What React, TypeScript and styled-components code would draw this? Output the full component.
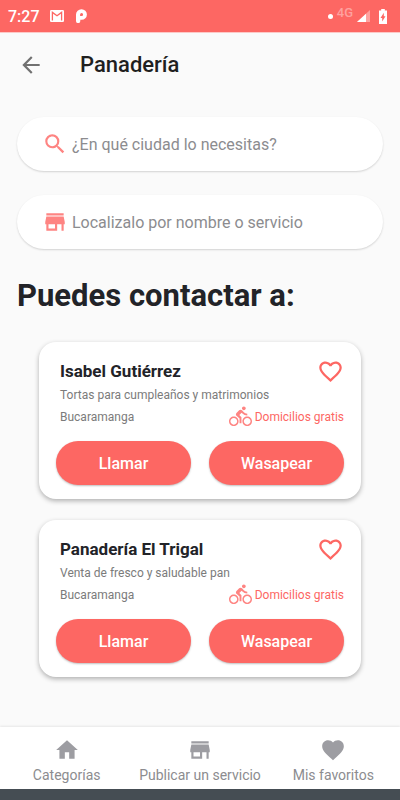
import React from "react";
import styled, { createGlobalStyle } from "styled-components";
import {
  MdArrowBack,
  MdDirectionsBike,
  MdFavorite,
  MdFavoriteBorder,
  MdHome,
  MdSearch,
  MdStore,
} from "react-icons/md";

const GlobalStyle = createGlobalStyle`
  *, *::before, *::after { box-sizing: border-box; }
  body {
    margin: 0;
    background: #fafafa;
    color: #222328;
    font-family: Roboto, "Liberation Sans", sans-serif;
  }
  button, input { font: inherit; }
`;

const coral = "#fd6763";
const softCoral = "#fe8482";

const Screen = styled.div`
  display: flex;
  flex-direction: column;
  min-height: 100vh;
`;

const StatusBar = styled.div`
  display: flex;
  align-items: center;
  height: 33px;
  padding: 0 13px 0 8px;
  border-bottom: 1px solid #fdc9c7;
  background: ${coral};
  color: #fff;
  font-size: 16px;
  font-weight: 500;
`;

const StatusIcons = styled.div<{ $end?: boolean }>`
  display: flex;
  align-items: center;
  gap: ${(p) => (p.$end ? 4 : 12)}px;
  margin-left: ${(p) => (p.$end ? "auto" : "10px")};
`;

const Network = styled.span`
  align-self: flex-start;
  color: #fea19f;
  font-size: 13px;
  font-weight: 500;
  line-height: 10px;
`;

const AppBar = styled.header`
  display: flex;
  align-items: center;
  gap: 36px;
  height: 64px;
  padding: 0 18px;
`;

const IconButton = styled.button<{ $color: string }>`
  display: flex;
  padding: 0;
  border: 0;
  background: none;
  color: ${(p) => p.$color};
  cursor: pointer;
`;

const PageTitle = styled.h1`
  margin: 0;
  font-size: 22px;
  font-weight: 500;
  line-height: 28px;
  color: #1f1f1f;
`;

const Main = styled.main`
  flex: 1;
  padding: 20px 17px;
`;

const Filters = styled.form`
  display: flex;
  flex-direction: column;
  gap: 24px;
`;

const SearchField = styled.label`
  display: flex;
  align-items: center;
  gap: 4px;
  height: 54px;
  padding: 0 25px;
  border-radius: 27px;
  background: #fff;
  box-shadow: 0 1px 2px rgba(0, 0, 0, 0.16);
  color: ${softCoral};
`;

const SearchInput = styled.input`
  flex: 1;
  min-width: 0;
  padding: 2px 0 0;
  border: 0;
  outline: 0;
  background: none;
  color: #222328;
  font-size: 16px;
  line-height: 20px;
  &::placeholder {
    color: #8c8c8f;
    opacity: 1;
  }
`;

const SectionTitle = styled.h2`
  margin: 28px 0;
  font-size: 31px;
  font-weight: 700;
  line-height: 37px;
`;

const CardList = styled.div`
  display: flex;
  flex-direction: column;
  gap: 21px;
  margin: 0 22px;
`;

const Card = styled.article`
  padding: 15px 17px 14px;
  border-radius: 17px;
  background: #fff;
  box-shadow: 0 2px 5px rgba(0, 0, 0, 0.3);
`;

const CardRow = styled.div`
  display: flex;
  align-items: center;
  justify-content: space-between;
  padding-left: 4px;
`;

const CardHeader = styled(CardRow)`
  align-items: flex-end;
  height: 28px;
`;

const Name = styled.h3`
  margin: 0;
  font-size: 17px;
  font-weight: 700;
  line-height: 28px;
`;

const Detail = styled.p`
  margin: 0;
  color: #7b7b7b;
  font-size: 12px;
  line-height: 20px;
`;

const Delivery = styled.span`
  display: flex;
  align-items: center;
  gap: 3px;
  color: ${coral};
  font-size: 12px;
  line-height: 22px;
  svg {
    color: ${softCoral};
  }
`;

const Actions = styled.div`
  display: grid;
  grid-template-columns: 1fr 1fr;
  gap: 18px;
  margin-top: 13px;
`;

const ActionButton = styled.button`
  height: 44px;
  border: 0;
  border-radius: 22px;
  background: ${coral};
  box-shadow: 0 1px 2px rgba(0, 0, 0, 0.25);
  color: #fff;
  font-size: 16px;
  font-weight: 500;
  cursor: pointer;
`;

const BottomNav = styled.nav`
  display: grid;
  grid-template-columns: repeat(3, 1fr);
  padding: 10px 0 5px;
  background: #fff;
  box-shadow: 0 -1px 2px rgba(0, 0, 0, 0.08);
`;

const NavLink = styled.a`
  display: flex;
  flex-direction: column;
  align-items: center;
  gap: 3px;
  color: #8c8c8f;
  font-size: 14px;
  line-height: 18px;
  text-decoration: none;
  white-space: nowrap;
  svg {
    color: #9d9da2;
  }
`;

const SystemBar = styled.div`
  height: 11px;
  background: #454d53;
`;

const GmailIcon = () => (
  <svg width="14" height="12" viewBox="0 0 14 12" aria-hidden="true">
    <rect width="14" height="12" rx="1.2" fill="#fff" />
    <path d="M2.4 10.6V2.4L7 5.8l4.6-3.4v8.2" fill="none" stroke={coral} strokeWidth="1.3" />
  </svg>
);

const ParkingIcon = () => (
  <svg width="11" height="14" viewBox="0 0 11 14" aria-hidden="true">
    <path
      fill="#fff"
      fillRule="evenodd"
      d="M0 5.6A5.4 5.4 0 0 1 5.6.2a5.3 5.3 0 0 1 0 10.6H4.3v1.1a2 2 0 0 1-4.3 0zM5.6 4a1.5 1.5 0 0 0-1.5 1.5V7h1.5a1.5 1.5 0 0 0 0-3z"
    />
  </svg>
);

const SignalIcon = () => (
  <svg width="13" height="12" viewBox="0 0 13 12" aria-hidden="true">
    <path d="M13 0v12H0z" fill="#fea19f" />
    <path d="M9 3.7V12H0z" fill="#fff" />
  </svg>
);

const BatteryIcon = () => (
  <svg width="8" height="15" viewBox="0 0 8 15" aria-hidden="true">
    <path d="M2.2 0h3.6v1.5H8V15H0V1.5h2.2z" fill="#fff" />
    <path d="M4.8 3.8v3.4h1.7L3.2 12.4V8.9H1.5z" fill={coral} />
  </svg>
);

const DotIcon = () => (
  <svg width="5" height="5" viewBox="0 0 5 5" aria-hidden="true">
    <circle cx="2.5" cy="2.5" r="2.5" fill="#fff" />
  </svg>
);

const Signals = styled(StatusIcons)`
  height: 16px;
  svg:nth-of-type(3) {
    margin-left: 5px;
  }
`;

const providers = [
  {
    name: "Isabel Gutiérrez",
    detail: "Tortas para cumpleaños y matrimonios",
    city: "Bucaramanga",
  },
  {
    name: "Panadería El Trigal",
    detail: "Venta de fresco y saludable pan",
    city: "Bucaramanga",
  },
];

export default function App() {
  return (
    <>
      <GlobalStyle />
      <Screen>
        <StatusBar>
          <span>7:27</span>
          <StatusIcons>
            <GmailIcon />
            <ParkingIcon />
          </StatusIcons>
          <Signals $end>
            <DotIcon />
            <Network>4G</Network>
            <SignalIcon />
            <BatteryIcon />
          </Signals>
        </StatusBar>
        <AppBar>
          <IconButton $color="#717171" aria-label="Volver">
            <MdArrowBack size={26} />
          </IconButton>
          <PageTitle>Panadería</PageTitle>
        </AppBar>
        <Main>
          <Filters>
            <SearchField>
              <MdSearch size={26} />
              <SearchInput
                aria-label="Ciudad"
                placeholder="¿En qué ciudad lo necesitas?"
              />
            </SearchField>
            <SearchField>
              <MdStore size={26} />
              <SearchInput
                aria-label="Nombre o servicio"
                placeholder="Localizalo por nombre o servicio"
              />
            </SearchField>
          </Filters>
          <SectionTitle>Puedes contactar a:</SectionTitle>
          <CardList>
            {providers.map((provider) => (
              <Card key={provider.name}>
                <CardHeader>
                  <Name>{provider.name}</Name>
                  <IconButton $color={coral} aria-label="Agregar a favoritos">
                    <MdFavoriteBorder size={27} />
                  </IconButton>
                </CardHeader>
                <CardRow>
                  <Detail>{provider.detail}</Detail>
                </CardRow>
                <CardRow>
                  <Detail>{provider.city}</Detail>
                  <Delivery>
                    <MdDirectionsBike size={23} />
                    Domicilios gratis
                  </Delivery>
                </CardRow>
                <Actions>
                  <ActionButton>Llamar</ActionButton>
                  <ActionButton>Wasapear</ActionButton>
                </Actions>
              </Card>
            ))}
          </CardList>
        </Main>
        <BottomNav>
          <NavLink href="#categorias">
            <MdHome size={26} />
            Categorías
          </NavLink>
          <NavLink href="#publicar">
            <MdStore size={26} />
            Publicar un servicio
          </NavLink>
          <NavLink href="#favoritos">
            <MdFavorite size={26} />
            Mis favoritos
          </NavLink>
        </BottomNav>
        <SystemBar />
      </Screen>
    </>
  );
}
